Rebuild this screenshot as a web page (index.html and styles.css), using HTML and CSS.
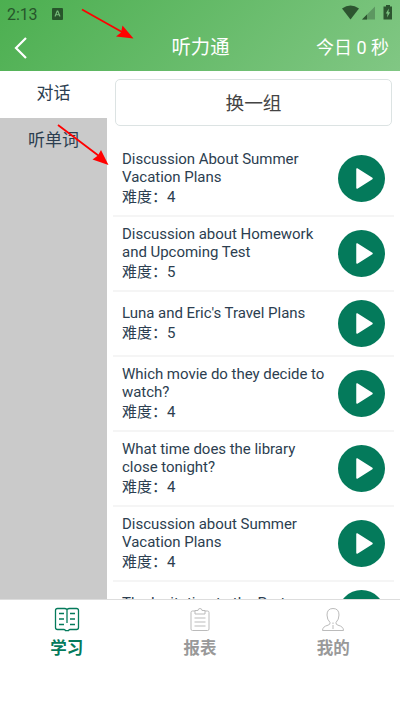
FILE: index.html
```html
<!DOCTYPE html>
<html lang="zh-CN">
<head>
<meta charset="utf-8">
<title>听力通</title>
<link rel="stylesheet" href="styles.css">
</head>
<body>
<div class="app">
  <header class="header">
    <div class="status">
      <span class="clock">2:13</span>
      <svg class="status-app" viewBox="0 0 11 12"><rect width="11" height="12" rx="1" fill="#27552b"/><path d="M3 8.500 5.200 3h.6L8 8.500M3.800 6.800h3.400" fill="none" stroke="#77bb7a" stroke-width="1.100"/></svg>
      <svg class="status-icons" viewBox="0 0 51 16">
        <path d="M0 3.500Q8.500-2.500 17 3.500L8.500 14.500Z" fill="#2d5530"/>
        <path d="M20 14.500 33 1.500V14.500Z" fill="#5d9761"/><path d="M20 14.500 25 9.500V14.500Z" fill="#2d5530"/>
        <path d="M44 0h4v1.500h2v13h-8.500v-13H44Z" fill="#2d5530"/><path d="M46.800 3.500 43.800 8.500h1.700l-.4 4 3-5.200h-1.700Z" fill="#7cc380"/>
      </svg>
    </div>
    <div class="navbar">
      <svg class="back" viewBox="0 0 14 22"><path d="M12 1 2 11l10 10" fill="none" stroke="#fff" stroke-width="2.200"/></svg>
      <h1 class="title">听力通</h1>
      <span class="today">今日 0 秒</span>
    </div>
  </header>
  <main class="content">
    <nav class="side">
      <div class="side-item active">对话</div>
      <div class="side-item">听单词</div>
    </nav>
    <section class="list">
      <button class="refresh">换一组</button>
      <article class="row"><div class="text"><div class="name">Discussion About Summer<br>Vacation Plans</div><div class="level">难度：4</div></div><svg class="play" viewBox="0 0 47 47"><circle cx="23.500" cy="23.500" r="23.500"/><path d="M19 14v19l15-9.500Z"/></svg></article>
      <article class="row"><div class="text"><div class="name">Discussion about Homework<br>and Upcoming Test</div><div class="level">难度：5</div></div><svg class="play" viewBox="0 0 47 47"><circle cx="23.500" cy="23.500" r="23.500"/><path d="M19 14v19l15-9.500Z"/></svg></article>
      <article class="row single"><div class="text"><div class="name">Luna and Eric's Travel Plans</div><div class="level">难度：5</div></div><svg class="play" viewBox="0 0 47 47"><circle cx="23.500" cy="23.500" r="23.500"/><path d="M19 14v19l15-9.500Z"/></svg></article>
      <article class="row"><div class="text"><div class="name">Which movie do they decide to<br>watch?</div><div class="level">难度：4</div></div><svg class="play" viewBox="0 0 47 47"><circle cx="23.500" cy="23.500" r="23.500"/><path d="M19 14v19l15-9.500Z"/></svg></article>
      <article class="row"><div class="text"><div class="name">What time does the library<br>close tonight?</div><div class="level">难度：4</div></div><svg class="play" viewBox="0 0 47 47"><circle cx="23.500" cy="23.500" r="23.500"/><path d="M19 14v19l15-9.500Z"/></svg></article>
      <article class="row"><div class="text"><div class="name">Discussion about Summer<br>Vacation Plans</div><div class="level">难度：4</div></div><svg class="play" viewBox="0 0 47 47"><circle cx="23.500" cy="23.500" r="23.500"/><path d="M19 14v19l15-9.500Z"/></svg></article>
      <article class="row single"><div class="text"><div class="name">The Invitation to the Party</div></div><svg class="play" viewBox="0 0 47 47"><circle cx="23.500" cy="23.500" r="23.500"/><path d="M19 14v19l15-9.500Z"/></svg></article>
    </section>
  </main>
  <footer class="tabs">
    <div class="tab selected">
      <svg viewBox="0 0 26 26" fill="none" stroke="currentColor" stroke-width="1.300"><path d="M13 2.500Q12 1.500 10.500 1.500H3.500Q1.500 1.500 1.500 3.500V20.500Q1.500 22.500 3.500 22.500H10Q11.200 22.500 11.500 23.700H14.500Q14.800 22.500 16 22.500H22.500Q24.500 22.500 24.500 20.500V3.500Q24.500 1.500 22.500 1.500H15.500Q14 1.500 13 2.500V16M5 6.500H10M5 12H10M5 17.500H10M16 6.500H21M16 12H21M16 17.500H21"/></svg>
      <span>学习</span>
    </div>
    <div class="tab">
      <svg class="thin" viewBox="0 0 26 26" fill="none" stroke="currentColor"><path d="M8 4H5.500Q4 4 4 5.500V22Q4 23.500 5.500 23.500H20.500Q22 23.500 22 22V5.500Q22 4 20.500 4H18M8 7V3.500H11Q11 1.500 13 1.500T15 3.500H18V7ZM7.500 11H18.500M7.500 15H18.500M7.500 19H18.500"/></svg>
      <span>报表</span>
    </div>
    <div class="tab">
      <svg class="thin" viewBox="0 0 26 26" fill="none" stroke="currentColor"><path d="M10 15.500Q7 12.500 7 8Q7 1.500 13 1.500T19 8Q19 12.500 16 15.500Q15.500 17.500 18 18.200Q23.500 19.500 23.500 23.500H2.500Q2.500 19.500 8 18.200Q10.500 17.500 10 15.500M13 15.500V17M13 18V22"/></svg>
      <span>我的</span>
    </div>
  </footer>
  <svg class="arrows" viewBox="0 0 400 710">
    <path d="M82 9.500 122 32M58 125 99 156" stroke="#f00" stroke-width="1.800"/>
    <path d="M133.500 38.500 116 36.500 121 32.500 122.500 25.500ZM108.500 165 92.500 159.500 98 155.500 101 150Z" fill="#f00"/>
  </svg>
</div>
</body>
</html>
```
FILE: styles.css
```css
* { box-sizing: border-box; }
body { margin: 0; font-family: Roboto, "Noto Sans CJK SC", sans-serif; color: #2c3e50; background: #fff; }
.app { position: relative; width: 400px; height: 710px; overflow: hidden; display: flex; flex-direction: column; }
.header { flex: none; height: 71px; background: linear-gradient(135deg, #4caf50, #81c784); color: #fff; }
.status { height: 27px; display: flex; align-items: center; padding: 0 7px; color: #27552b; }
.clock { font-size: 16px; letter-spacing: -0.1px; width: 45px; margin-top: 1px; }
.status-app { width: 11px; height: 12px; }
.status-icons { width: 51px; height: 16px; margin: -1px 0 0 auto; }
.navbar { height: 39px; display: grid; grid-template-columns: 1fr auto 1fr; align-items: center; padding: 0 11px 0 14px; }
.back { width: 14px; height: 22px; margin-top: 2px; }
.title { margin: -1px 2px 0 0; font-size: 19.300px; font-weight: 400; }
.today { justify-self: end; font-size: 18px; margin-top: -2px; }
.content { flex: none; height: 528px; display: flex; overflow: hidden; }
.side { width: 107px; background: #cacaca; }
.side-item { height: 47px; line-height: 45px; text-align: center; font-size: 17px; }
.side-item.active { background: #fff; }
.list { flex: 1; padding: 8px 6px 0; }
.refresh { display: block; width: 277px; height: 47px; margin: 0 0 16px 2px; padding: 0 0 3px; border: 1px solid #dce3e3; border-radius: 5px; background: #fff; color: #444; font: 18.700px Roboto, "Noto Sans CJK SC", sans-serif; }
.row { height: 75px; width: 281px; display: flex; align-items: center; justify-content: space-between; padding: 0 9px; border-bottom: 2px solid #f5f5f5; }
.row.single { height: 65px; }
.text { white-space: nowrap; padding-top: 2px; }
.row:last-child { align-items: flex-start; padding-top: 8px; }
.row:last-child .text { padding-top: 5px; }
.name { font-size: 15px; line-height: 17.500px; letter-spacing: -0.030px; }
.level { font-size: 15px; line-height: 22px; }
.play { flex: none; width: 47px; height: 47px; }
.play circle { fill: #047a5b; }
.play path { fill: #fff; stroke: #fff; stroke-width: 1.500; stroke-linejoin: round; }
.tabs { flex: 1; display: flex; border-top: 1px solid #ddd; background: #fff; }
.tab { flex: 1; display: flex; flex-direction: column; align-items: center; padding-top: 7px; color: #999; font-size: 16.500px; font-weight: 700; line-height: 24px; }
.tab svg { width: 26px; height: 26px; margin-bottom: 4px; }
.tab .thin { color: #bbb; }
.tab.selected { color: #047a5b; }
.arrows { position: absolute; inset: 0; width: 400px; height: 710px; pointer-events: none; }
```
